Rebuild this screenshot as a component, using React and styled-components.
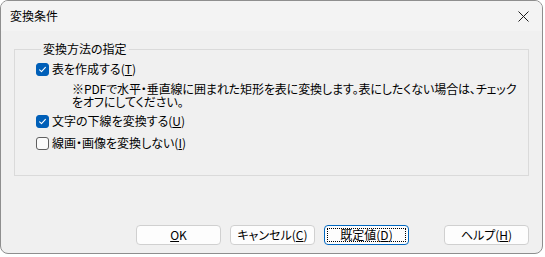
import styled, { createGlobalStyle } from "styled-components";

const GlobalStyle = createGlobalStyle`
  html, body {
    margin: 0;
    padding: 0;
    background: #ffffff;
  }
  body {
    font-family: "Noto Sans CJK JP", "Noto Sans", sans-serif;
    font-size: 12px;
    color: #000;
    font-feature-settings: "palt";
  }
`;

const Window = styled.div`
  width: 543px;
  height: 254px;
  box-sizing: border-box;
  border: 1px solid #8e8e8e;
  border-radius: 8px;
  overflow: hidden;
  display: flex;
  flex-direction: column;
  background: #f0f0f0;
`;

const TitleBar = styled.div`
  height: 30px;
  flex-shrink: 0;
  display: flex;
  align-items: center;
  justify-content: space-between;
  padding: 0 0 0 9px;
  background: #f3f3f3;
  font-size: 12px;
  line-height: 16px;
`;

const CloseButton = styled.div`
  width: 36px;
  height: 30px;
  display: flex;
  align-items: center;
  justify-content: center;
  margin-right: 1px;
`;

const Body = styled.div`
  flex: 1;
  display: flex;
  flex-direction: column;
  padding: 10px 13px 7px 13px;
`;

const Group = styled.fieldset`
  margin: 0;
  padding: 4px 0 24px 21px;
  border: 1px solid #dadada;
  border-radius: 0;
  display: flex;
  flex-direction: column;
`;

const Legend = styled.legend`
  padding: 0 2px;
  margin-left: 5px;
  line-height: 16px;
  font-size: 12px;
`;

const Row = styled.label`
  display: flex;
  align-items: center;
  gap: 3px;
  height: 16px;
  line-height: 16px;
  margin-top: ${(p) => p.$gap || 0}px;
`;

const Box = styled.span`
  width: 13px;
  height: 13px;
  box-sizing: border-box;
  border-radius: 3px;
  display: inline-flex;
  align-items: center;
  justify-content: center;
  flex-shrink: 0;
  background: ${(p) => (p.$checked ? "#005fb8" : "#fbfbfb")};
  border: 1px solid ${(p) => (p.$checked ? "#005fb8" : "#5f5f5f")};
`;

const Note = styled.div`
  margin: 5px 0 0 36px;
  line-height: 13px;
  font-size: 12px;
  letter-spacing: -0.1px;
`;

const ButtonRow = styled.div`
  margin-top: auto;
  display: flex;
  justify-content: flex-end;
  gap: 9px;
  padding-bottom: 1px;
`;

const Button = styled.div`
  width: 85px;
  height: 20px;
  box-sizing: border-box;
  display: flex;
  align-items: center;
  justify-content: center;
  position: relative;
  background: #fdfdfd;
  border: 1px solid ${(p) => (p.$default ? "#0067c0" : "#d0d0d0")};
  border-radius: 4px;
  font-size: 12px;
  line-height: 16px;
  margin-left: ${(p) => (p.$apart ? 26 : 0)}px;
`;

const FocusRing = styled.span`
  position: absolute;
  inset: 2px;
  border: 1px dotted #000;
  pointer-events: none;
`;

function Check({ checked }) {
  return (
    <Box $checked={checked}>
      {checked && (
        <svg width="11" height="11" viewBox="0 0 11 11">
          <path
            d="M2.6 5.8 L4.5 7.6 L8.4 3.4"
            fill="none"
            stroke="#ffffff"
            strokeWidth="1.1"
            strokeLinecap="round"
            strokeLinejoin="round"
          />
        </svg>
      )}
    </Box>
  );
}

export default function App() {
  return (
    <>
      <GlobalStyle />
      <Window>
        <TitleBar>
          <span>変換条件</span>
          <CloseButton>
            <svg width="11" height="11" viewBox="0 0 11 11">
              <path d="M0.5 0.5 L10.5 10.5 M10.5 0.5 L0.5 10.5" stroke="#1b1b1b" strokeWidth="1" />
            </svg>
          </CloseButton>
        </TitleBar>
        <Body>
          <Group>
            <Legend>変換方法の指定</Legend>
            <Row>
              <Check checked />
              <span>
                表を作成する(<u>T</u>)
              </span>
            </Row>
            <Note>
              ※PDFで水平・垂直線に囲まれた矩形を表に変換します。表にしたくない場合は、チェック
              <br />
              をオフにしてください。
            </Note>
            <Row $gap={5}>
              <Check checked />
              <span>
                文字の下線を変換する(<u>U</u>)
              </span>
            </Row>
            <Row $gap={6}>
              <Check />
              <span>
                線画・画像を変換しない(<u>I</u>)
              </span>
            </Row>
          </Group>
          <ButtonRow>
            <Button>
              <span>
                <u>O</u>K
              </span>
            </Button>
            <Button>
              <span>
                キャンセル(<u>C</u>)
              </span>
            </Button>
            <Button $default>
              <FocusRing />
              <span>
                既定値(<u>D</u>)
              </span>
            </Button>
            <Button $apart>
              <span>
                ヘルプ(<u>H</u>)
              </span>
            </Button>
          </ButtonRow>
        </Body>
      </Window>
    </>
  );
}
